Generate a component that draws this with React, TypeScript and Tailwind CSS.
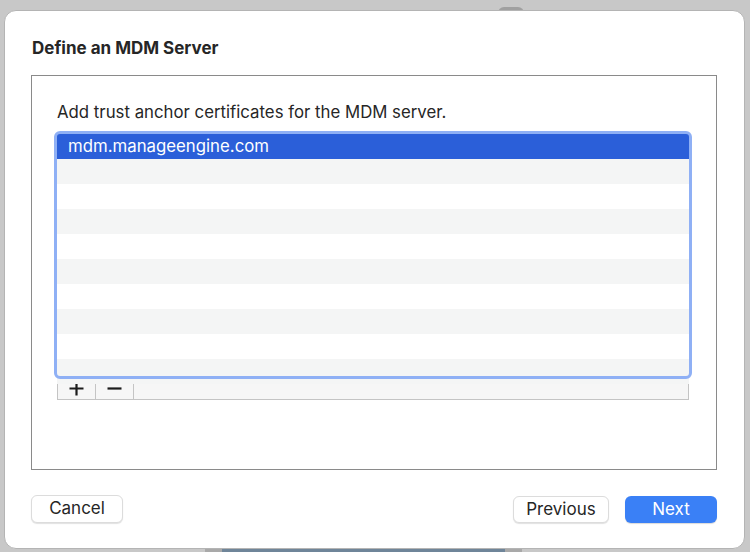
import React from 'react'

const rows = Array.from({ length: 9 })

export default function App() {
  return (
    <div
      className="relative w-[750px] h-[552px] overflow-hidden bg-[#c8c8c8] pt-[10px] pl-[4px]"
      style={{ fontFamily: 'Inter, "Noto Sans", sans-serif' }}
    >
      {/* stuff behind the sheet */}
      <div className="absolute left-[222px] top-[548px] w-[283px] h-[4px] bg-[#6f8599]" />
      <div className="absolute left-[205px] top-[548px] w-[17px] h-[4px] bg-[#a9a9a9]" />
      <div className="absolute left-[505px] top-[548px] w-[17px] h-[4px] bg-[#a9a9a9]" />
      <div className="absolute left-[498px] top-[7px] w-[26px] h-[6px] rounded-t-full bg-[#a0a0a0]" />

      {/* sheet */}
      <div className="relative w-[741px] h-[539px] rounded-[12px] bg-white border border-[#b4b4b4] flex flex-col px-[26px]">
        <h1 className="mt-[27px] text-[17px] leading-[20px] font-bold text-[#262626] pl-[1px]">
          Define an MDM Server
        </h1>

        {/* content box */}
        <div className="mt-[17px] w-[686px] h-[395px] border border-[#8a8a8a] flex flex-col px-[25px] pt-[26px]">
          <p className="text-[16.8px] leading-[20px] text-[#262626]">
            Add trust anchor certificates for the MDM server.
          </p>

          <div className="mt-[12px] w-[632px]">
            <div className="h-[242px] flex flex-col bg-white rounded-[3px] outline outline-[3px] outline-[#8fb0f5] relative z-10">
              <div className="h-[25px] shrink-0 bg-[#2b5fd9] text-white text-[16.8px] leading-[25px] pl-[11px]">
                mdm.manageengine.com
              </div>
              {rows.map((_, i) => (
                <div
                  key={i}
                  className={i % 2 === 0 ? 'h-[25px] shrink-0 bg-[#f4f5f5]' : 'h-[25px] shrink-0 bg-white'}
                />
              ))}
            </div>

            {/* +/- bar */}
            <div className="h-[24px] flex border border-t-0 border-[#c4c4c4] bg-[#f6f6f6]">
              <div className="w-[38px] flex items-center justify-center border-r border-[#c4c4c4] pt-[1px]">
                <svg width="15" height="15" viewBox="0 0 15 15">
                  <path d="M7.5 0.5v14M0.5 7.5h14" stroke="#1c1c1c" strokeWidth="2.2" />
                </svg>
              </div>
              <div className="w-[38px] flex items-center justify-center border-r border-[#c4c4c4] pt-[1px]">
                <svg width="15" height="15" viewBox="0 0 15 15">
                  <path d="M0.5 7.5h14" stroke="#1c1c1c" strokeWidth="2.2" />
                </svg>
              </div>
              <div className="flex-1" />
            </div>
          </div>
        </div>

        {/* footer */}
        <div className="mt-[25px] flex items-start">
          <button className="w-[92px] h-[28px] rounded-[6px] bg-white border border-[#dcdcdc] shadow-[0_1px_1px_rgba(0,0,0,0.12)] text-[17px] text-[#262626]">
            Cancel
          </button>
          <div className="flex-1" />
          <button className="mt-[1px] w-[96px] h-[27px] rounded-[6px] bg-white border border-[#dcdcdc] shadow-[0_1px_1px_rgba(0,0,0,0.12)] text-[17px] text-[#262626]">
            Previous
          </button>
          <button className="mt-[1px] ml-[16px] mr-[1px] w-[92px] h-[27px] rounded-[6px] bg-[#3a80f6] shadow-[0_1px_1px_rgba(0,0,0,0.15)] text-[17px] text-white">
            Next
          </button>
        </div>
      </div>
    </div>
  )
}
